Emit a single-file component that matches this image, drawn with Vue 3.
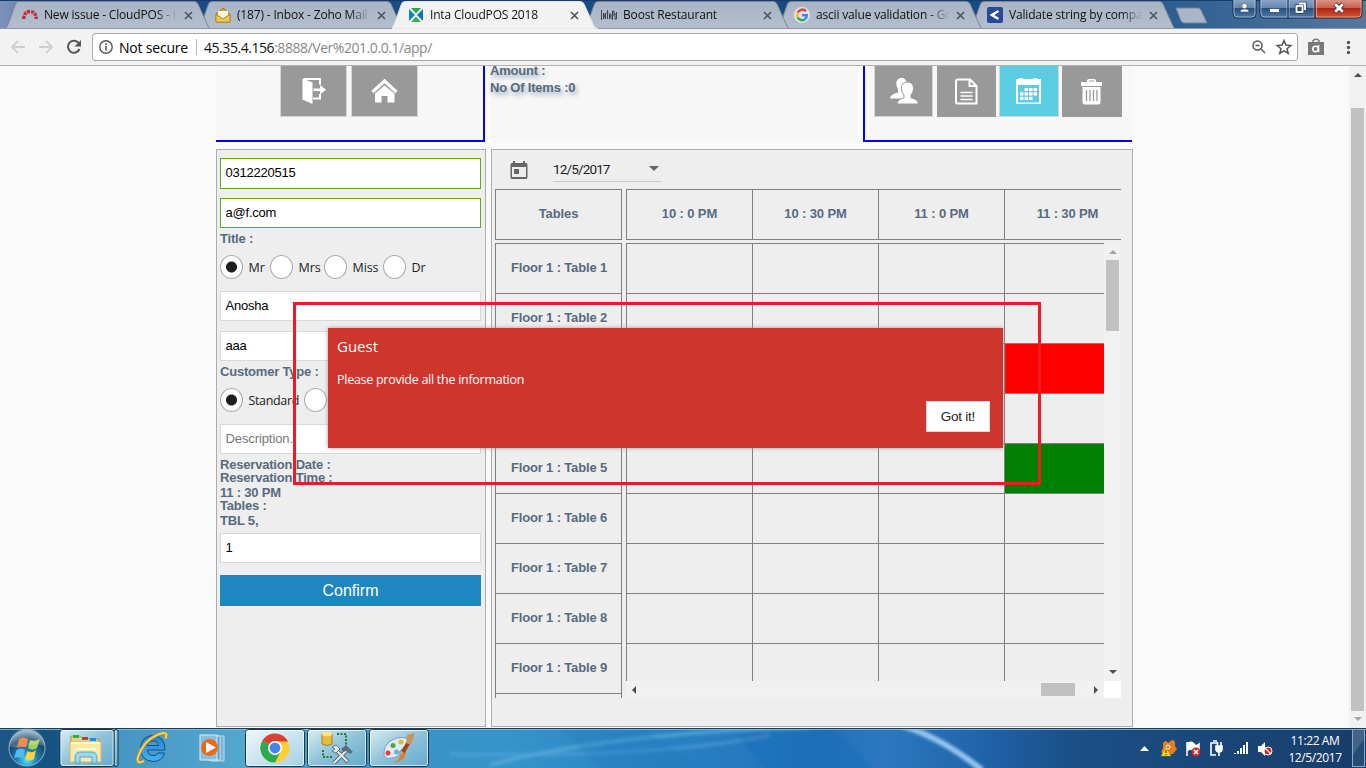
<script setup>
const tabs = [
  { title: 'New issue - CloudPOS - I', icon: 'redmine' },
  { title: '(187) - Inbox - Zoho Mail', icon: 'mail' },
  { title: 'Inta CloudPOS 2018', icon: 'inta', active: true },
  { title: 'Boost Restaurant', icon: 'pos' },
  { title: 'ascii value validation - Go', icon: 'google' },
  { title: 'Validate string by compa', icon: 'code' },
]
const order = [5, 4, 3, 1, 0, 2]
const tabPath = (i) => {
  const x = i * 193
  return `M${x + 5} 29 C${x + 9} 26 ${x + 13} 9 ${x + 16} 3 Q${x + 17} 1.5 ${x + 20} 1.5 H${x + 194} Q${x + 197} 1.5 ${x + 198} 4 L${x + 208} 26 Q${x + 209} 29 ${x + 212} 29 Z`
}
const titles = ['Mr', 'Mrs', 'Miss', 'Dr']
const times = ['10 : 0 PM', '10 : 30 PM', '11 : 0 PM', '11 : 30 PM']
const rows = [1, 2, 3, 4, 5, 6, 7, 8, 9, 10]
const cellClass = (r, c) => (c === 4 && r === 3 ? 'busy' : c === 4 && r === 5 ? 'free' : '')
</script>

<template>
  <div class="screen">
    <header class="tabstrip">
      <svg class="tabshapes" width="1366" height="29" viewBox="0 0 1366 29">
        <defs>
          <linearGradient id="frame" x1="0" x2="1" y1="0" y2="0">
            <stop offset="0" stop-color="#7b93b9" /><stop offset=".02" stop-color="#6482ae" />
            <stop offset=".1" stop-color="#1c4a85" /><stop offset=".3" stop-color="#1a4c86" />
            <stop offset=".7" stop-color="#174a80" /><stop offset=".86" stop-color="#2d5f92" />
            <stop offset="1" stop-color="#55779f" />
          </linearGradient>
          <linearGradient id="tabfill" x1="0" x2="0" y1="0" y2="1">
            <stop offset="0" stop-color="#a9b4c5" /><stop offset="1" stop-color="#b3bfcd" />
          </linearGradient>
        </defs>
        <rect width="1366" height="29" fill="url(#frame)" />
        <rect width="1366" height="1" fill="#163c6c" />
        <path v-for="i in order" :key="i" :d="tabPath(i)" :fill="i === 2 ? '#f2f2f2' : 'url(#tabfill)'" :stroke="i === 2 ? '#dfe3e9' : '#7c8795'" />
        <path d="M1176 8 H1198 Q1200 8 1201 10 L1207 23 H1185 Q1182 23 1181 21 Z" fill="#aab6c8" stroke="#73849d" />
        <rect y="28" width="392" height="1" fill="#8e98a5" /><rect x="598" y="28" width="768" height="1" fill="#8e98a5" />
      </svg>
      <div class="tabrow">
        <div v-for="t in tabs" :key="t.title" class="tab">
          <svg class="fav" width="16" height="16" viewBox="0 0 16 16">
            <path v-if="t.icon === 'redmine'" d="M1.800 12 Q2 4.500 8 4.500 T14.200 12" fill="none" stroke="#c62b35" stroke-width="3.400" stroke-dasharray="3 .900" />
            <g v-else-if="t.icon === 'mail'">
              <path d="M1 7 L8 1 15 7 V15 H1Z" fill="#d1a52f" stroke="#a77d20" /><path d="M3 4 H13 V8 L8 11.500 3 8Z" fill="#fff8e0" />
              <path d="M1 7.500 L8 12 15 7.500 V15 H1Z" fill="#e9c85a" stroke="#ad8322" stroke-width=".8" />
            </g>
            <g v-else-if="t.icon === 'inta'">
              <path d="M3 1 H13 L8 6.500Z" fill="#2ba84a" /><path d="M3 15 H13 L8 9.500Z" fill="#35b34a" />
              <path d="M1 2 L7 8 1 14Z" fill="#0b83c6" /><path d="M15 2 L9 8 15 14Z" fill="#0b75b7" />
            </g>
            <g v-else-if="t.icon === 'pos'" fill="none" stroke="#3d444f">
              <path d="M.5 3V13M2.500 12V6L4.500 12V6M6.500 3V12M5.500 6H7.500M8.500 12V7H10V12M8.500 9H10M11.500 13V4H13V8H11.500M14 6V12H15.500V5" />
            </g>
            <g v-else-if="t.icon === 'google'" fill="none" stroke-width="2.500">
              <circle cx="8" cy="8" r="8" fill="#dfe5ef" />
              <path d="M12 4.300 A5 5 0 0 0 3.700 5.500" stroke="#ea4335" /><path d="M3.700 5.500 A5 5 0 0 0 3.700 10.500" stroke="#fbbc05" />
              <path d="M3.700 10.500 A5 5 0 0 0 11 12.200" stroke="#34a853" /><path d="M11 12.200 A5 5 0 0 0 12.800 8.300 H8" stroke="#4285f4" />
            </g>
            <g v-else><rect width="16" height="16" rx="2" fill="#27489c" /><path d="M11.500 4 L5 8 11.500 12" fill="none" stroke="#fff" stroke-width="2.600" /></g>
          </svg>
          <span :class="['tabtitle', { front: t.active }]">{{ t.title }}</span>
          <svg class="tabclose" width="9" height="9" viewBox="0 0 9 9"><path d="M1 1L8 8M8 1L1 8" stroke="#4e545c" stroke-width="1.600" /></svg>
        </div>
      </div>
      <svg class="winbtns" width="134" height="20" viewBox="0 0 134 20">
        <defs>
          <linearGradient id="wb" x1="0" x2="0" y1="0" y2="1"><stop offset="0" stop-color="#8da7c8" /><stop offset=".48" stop-color="#6384ad" /><stop offset=".5" stop-color="#26507f" /><stop offset="1" stop-color="#517ca8" /></linearGradient>
          <linearGradient id="wc" x1="0" x2="0" y1="0" y2="1"><stop offset="0" stop-color="#dc9a8d" /><stop offset=".46" stop-color="#c9614e" /><stop offset=".5" stop-color="#ad2511" /><stop offset="1" stop-color="#d25a38" /></linearGradient>
        </defs>
        <path d="M1 -1 V14 Q1 18 5 18 H20 Q24 18 24 14 V-1Z" fill="url(#wb)" stroke="#10294b" /><path d="M2 0V14Q2 17 5 17H20Q23 17 23 14V0" fill="none" stroke="#b5c8dd" stroke-opacity=".75" />
        <path d="M28 -1 V14 Q28 18 32 18 H83 V-1Z" fill="url(#wb)" stroke="#10294b" /><path d="M29 0V14Q29 17 32 17H55V0M57 0V17H82V0" fill="none" stroke="#b5c8dd" stroke-opacity=".75" /><path d="M56 0V18" stroke="#10294b" />
        <path d="M83 -1 V18 H126 Q130 18 130 14 V-1Z" fill="url(#wc)" stroke="#4d1415" /><path d="M84.500 0V17H126Q129 17 129 14V0" fill="none" stroke="#efb9aa" stroke-opacity=".7" />
        <circle cx="12.500" cy="6" r="2.700" fill="#fff" stroke="#34465f" stroke-width=".6" /><path d="M8 12 Q8 9 12.500 9 T17 12Z" fill="#fff" stroke="#34465f" stroke-width=".6" />
        <rect x="37.500" y="8.500" width="10" height="4" fill="#fff" stroke="#455a75" />
        <g fill="none" stroke="#34465f" stroke-width="3.500"><path d="M67 3.500H73V10" /><rect x="64.500" y="6" width="6" height="6" /></g>
        <g fill="none" stroke="#fff" stroke-width="1.800"><path d="M67 3.500H73V10" /><rect x="64.500" y="6" width="6" height="6" /></g>
        <path d="M94 4L102 12M102 4L94 12" transform="translate(9 0)" stroke="#573541" stroke-width="4.600" /><path d="M103.300 4.300L110.700 11.700M110.700 4.300L103.300 11.700" stroke="#fff" stroke-width="2.700" />
      </svg>
    </header>

    <nav class="toolbar">
      <svg class="navicons" width="92" height="36" viewBox="0 0 92 36" fill="none">
        <path d="M25 18H12M18 12L12 18L18 24M39 18H52M46 12L52 18L46 24" stroke="#cfcfcf" stroke-width="1.800" />
        <path d="M79 14.500A6 6 0 1 0 79.500 20" stroke="#555" stroke-width="2" /><path d="M81 11V17.500H74.500Z" fill="#555" />
      </svg>
      <div class="omnibox">
        <svg width="14" height="14" viewBox="0 0 14 14"><circle cx="7" cy="7" r="6.200" fill="none" stroke="#555" stroke-width="1.400" /><path d="M7 6V10.500M7 3.300V4.900" stroke="#555" stroke-width="1.600" /></svg>
        <span class="secure">Not secure</span><i class="divider"></i>
        <span class="url"><b>45.35.4.156</b>:8888/Ver%201.0.0.1/app/</span>
        <svg class="omniright" width="42" height="18" viewBox="0 0 42 18" fill="none" stroke="#555" stroke-width="1.500">
          <circle cx="6.500" cy="7.500" r="4.500" /><path d="M10 11L14 15M4.500 7.500H8.500" />
          <path d="M33 2.500L34.900 7.100 39.800 7.500 36 10.700 37.200 15.500 33 12.900 28.800 15.500 30 10.700 26.200 7.500 31.100 7.100Z" />
        </svg>
      </div>
      <svg class="ext" width="68" height="36" viewBox="0 0 68 36">
        <path d="M10 13H26V26H10Z" fill="#797979" /><path d="M15 13V11.500Q18 9 21 11.500V13" fill="none" stroke="#797979" stroke-width="1.500" /><circle cx="17.500" cy="20" r="2.700" fill="none" stroke="#fff" stroke-width="1.500" /><path d="M20.500 16V23" stroke="#fff" stroke-width="1.600" />
        <g fill="#555"><circle cx="50.500" cy="13.500" r="1.700" /><circle cx="50.500" cy="18.500" r="1.700" /><circle cx="50.500" cy="23.500" r="1.700" /></g>
      </svg>
    </nav>

    <div class="viewport">
      <main class="page">
        <div class="top">
          <section class="topleft">
            <button class="tile"><svg width="28" height="30" viewBox="0 0 28 30" fill="none" stroke="#fff" stroke-width="1.900"><path d="M3.500 3H20V8.500M20 18V22.500H13" /><path d="M2.500 2.500L12.500 6.500V28L2.500 23.500Z" fill="#fff" stroke="none" /><path d="M13.500 12.500H20V9L26 13.700 20 18.500V15H13.500Z" fill="#fff" stroke="none" /></svg></button>
            <button class="tile"><svg width="28" height="30" viewBox="0 0 28 30"><path d="M1.500 16L13.500 5L25.500 16" fill="none" stroke="#fff" stroke-width="3.200" /><path d="M4 17.500L13.500 9.500 23.500 17.500V26.500H16.500V20H10.500V26.500H4Z" fill="#fff" /></svg></button>
          </section>
          <section class="summary"><div>Amount :</div><div>No Of Items :0</div></section>
          <section class="topright">
            <button class="tile"><svg class="raised" width="32" height="30" viewBox="0 0 32 30" fill="#fff"><ellipse cx="13.500" cy="9" rx="5.200" ry="6.200" /><path d="M2 23.500Q2 19.500 10 17.500V13H17V23.500Z" /><path d="M9 29Q9 24.500 16 22.800V20Q13.300 17.500 13.300 13.500Q13.500 7 19.500 7T25.500 13.500Q25.500 17.500 23 20V22.800Q30.500 24.500 30.500 29Z" stroke="#999" stroke-width="1" /></svg></button>
            <button class="tile plain"><svg class="raised" width="28" height="30" viewBox="0 0 28 30" fill="none" stroke="#fff" stroke-width="2"><path d="M5 3.500H17L23.500 10V27.500H4.500Q3 27.500 3 26V5Q3 3.500 5 3.500ZM16.500 3.500V10H23.500" /><path d="M7.500 16.500H19.500M7.500 20H19.500M7.500 23.500H19.500" stroke-width="1.700" /></svg></button>
            <button class="tile blue"><svg width="28" height="30" viewBox="0 0 28 30"><path d="M1 3H4V2H8V3H18V2H22V3H26V28H1Z" fill="#fff" /><path d="M3 9H24V26.500H3Z" fill="#5bcde2" /><g fill="#fff"><path d="M9.500 12H13v3H9.500zM14 12h3.500v3H14zM18.500 12H22v3h-3.500zM5 16.200h3.500v3.300H5zM9.500 16.200H13v3.300H9.500zM14 16.200h3.500v3.300H14zM18.500 16.200H22v3.300h-3.500zM5 20.700h3.500V24H5zM9.500 20.700H13V24H9.500zM14 20.700h3.500V24H14z" /></g></svg></button>
            <button class="tile plain"><svg class="raised" width="28" height="30" viewBox="0 0 28 30"><path d="M9 6V4.500Q9 3 11 3H16Q18 3 18 4.500V6H24V10H3V6Z" fill="#fff" /><path d="M11 5H16" stroke="#999" /><path d="M4.500 11H22.500V26Q22.500 28.500 20 28.500H7Q4.500 28.500 4.500 26Z" fill="#fff" /><path d="M8.500 14V25M12 14V25M15.500 14V25M19 14V25" stroke="#999" stroke-width="1.300" /></svg></button>
          </section>
        </div>

        <div class="columns">
          <section class="form">
            <div class="field valid tall">0312220515</div>
            <div class="field valid mail">a@f.com</div>
            <div class="label title">Title :</div>
            <div class="radios">
              <span v-for="(t, i) in titles" :key="t" :class="['radio', 'r' + i]"><i :class="{ on: i === 0 }"></i>{{ t }}</span>
            </div>
            <div class="field first">Anosha</div>
            <div class="field last">aaa</div>
            <div class="label type">Customer Type :</div>
            <div class="radios">
              <span class="radio std"><i class="on"></i>Standard</span><span class="radio"><i></i></span>
            </div>
            <div class="field desc">Description.</div>
            <div class="label res">Reservation Date :<br />Reservation Time :</div>
            <div class="label val">11 : 30 PM</div>
            <div class="label tbl">Tables :</div>
            <div class="label val">TBL 5,</div>
            <div class="field count">1</div>
            <button class="confirm">Confirm</button>
          </section>

          <section class="schedule">
            <div class="datebar">
              <svg width="20" height="20" viewBox="0 0 20 20"><path d="M4 1H6V3H14V1H16V3H17Q18.500 3 18.500 5V17Q18.500 19 17 19H3Q1.500 19 1.500 17V5Q1.500 3 3 3H4ZM3 7V17H17V7Z" fill="#666" fill-rule="evenodd" /><rect x="5" y="9" width="5" height="5" fill="#666" /></svg>
              <div class="date">12/5/2017<i></i></div>
            </div>
            <div class="heads">
              <div class="corner">Tables</div>
              <div class="timeheads"><div v-for="t in times" :key="t">{{ t }}</div></div>
            </div>
            <div class="body">
              <div class="names"><div v-for="r in rows" :key="r"><template v-if="r < 10">Floor 1 : Table {{ r }}</template></div></div>
              <div class="scroller">
                <div class="upper">
                  <div class="cells">
                    <template v-for="r in rows" :key="r"><div v-for="c in 4" :key="c" :class="cellClass(r, c)"></div></template>
                  </div>
                  <div class="vbar"><b class="up dim"></b><i></i><b class="down"></b></div>
                </div>
                <div class="hbar"><b class="left"></b><i></i><b class="right"></b><span></span></div>
              </div>
            </div>
          </section>
        </div>
      </main>
      <div class="pagebar"><b class="up"></b><i></i><b class="down dim"></b></div>
    </div>

    <div class="dialog">
      <h2>Guest</h2>
      <p>Please provide all the information</p>
      <button>Got it!</button>
    </div>
    <div class="marker"></div>

    <footer class="taskbar">
      <svg class="wall" width="1366" height="40" viewBox="0 0 1366 40">
        <defs>
          <linearGradient id="tb" x1="0" x2="1" y1="0" y2="0">
            <stop offset="0" stop-color="#1d5685" /><stop offset=".04" stop-color="#155380" /><stop offset=".085" stop-color="#4596c2" /><stop offset=".18" stop-color="#53a8cf" /><stop offset=".28" stop-color="#3d92c4" /><stop offset=".37" stop-color="#3794ca" /><stop offset=".48" stop-color="#2982c3" /><stop offset=".6" stop-color="#2472b8" /><stop offset=".65" stop-color="#2b78bf" /><stop offset=".72" stop-color="#2063a9" /><stop offset=".785" stop-color="#1b4f86" /><stop offset="1" stop-color="#173d68" />
          </linearGradient>
          <linearGradient id="tile" x1="0" x2="1" y1="0" y2="1"><stop offset="0" stop-color="#d9edf4" /><stop offset=".5" stop-color="#8fc2d9" /><stop offset="1" stop-color="#64a9cd" /></linearGradient>
          <linearGradient id="hot" x1="0" x2="1" y1="0" y2="1"><stop offset="0" stop-color="#eff8fc" /><stop offset="1" stop-color="#a5d0e5" /></linearGradient>
          <radialGradient id="orb" cx=".5" cy=".85" r=".8"><stop offset="0" stop-color="#4ce3fa" /><stop offset=".35" stop-color="#1c82b4" /><stop offset=".75" stop-color="#194267" /><stop offset="1" stop-color="#81a4bd" /></radialGradient>
          <linearGradient id="ie" x1="0" x2="0" y1="0" y2="1"><stop offset="0" stop-color="#2a7fc9" /><stop offset="1" stop-color="#42b4ee" /></linearGradient>
          <filter id="soft"><feGaussianBlur stdDeviation="1.500" /></filter>
        </defs>
        <rect width="1366" height="40" fill="url(#tb)" />
        <g filter="url(#soft)" fill="none"><path d="M903 -2Q942 10 982 42" stroke="#94c3ef" stroke-width="6" /><path d="M490 37Q610 5 810 -1" stroke="#62b3df" stroke-opacity=".6" stroke-width="4" /><path d="M450 26Q660 30 770 7" stroke="#54a6df" stroke-opacity=".5" stroke-width="4" /><path d="M640 0Q680 24 700 42H600L560 0Z" fill="#1d75b6" fill-opacity=".25" /><path d="M735 5L765 42H875L835 0Z" fill="#1764b0" fill-opacity=".22" /></g>
        <rect width="1366" height="1" fill="#203b54" /><rect y="1" width="1366" height="1" fill="#8dc1dd" fill-opacity=".8" />
        <circle cx="27" cy="20" r="18" fill="url(#orb)" stroke="#8eb4c8" />
        <path d="M19 11Q23 8 28 11L26 20Q21 17 17 20Z" fill="#f36b25" /><path d="M30 12Q35 14 40 11L37 20Q33 23 28 20Z" fill="#9dd251" /><path d="M16.500 22Q21 19 25 22L23 31Q19 28 14 30Z" fill="#55baf2" /><path d="M27.500 23Q32 26 36 22L34 31Q29 34 25 31Z" fill="#ffd13b" />
        <path d="M9 18A18 18 0 0 1 45 18Q35 15 27 18T9 18" fill="#fff" fill-opacity=".2" />
        <g stroke="#18364d" fill="url(#tile)"><rect x="114" y="1.500" width="4" height="37" rx="2" /><rect x="60" y="1.500" width="54" height="37" rx="3" /><rect x="245.500" y="1.500" width="59" height="37" rx="3" fill="url(#hot)" /><rect x="307.500" y="1.500" width="59" height="37" rx="3" /><rect x="369.500" y="1.500" width="59" height="37" rx="3" /></g>
        <g fill="none" stroke="#fff" stroke-opacity=".65"><rect x="61" y="2.500" width="52" height="35" rx="2" /><rect x="246.500" y="2.500" width="57" height="35" rx="2" /><rect x="308.500" y="2.500" width="57" height="35" rx="2" /><rect x="370.500" y="2.500" width="57" height="35" rx="2" /></g>
        <g><path d="M71 8H80L83 11H99V32H71Z" fill="#e8d47e" stroke="#b79844" /><path d="M73 7H79V10H73Z" fill="#30b046" /><path d="M82 9H88V12H82Z" fill="#cf3c2c" /><path d="M90 10H96V13H90Z" fill="#3188d4" /><path d="M70 14H101V34H70Z" fill="#f8e9a8" stroke="#d2b766" /><path d="M71 15H100M75 21H96" stroke="#fff9d8" stroke-width="2" /><path d="M75 35V30Q75 24 80 24H92Q97 24 97 30V35H92V29H80V35Z" fill="#9cd7ee" stroke="#54a6c8" /></g>
        <g><path d="M165 22H147.500Q148 27.500 153 27.500Q156.500 27.500 158 25H164.500Q162 33.500 153 33.500Q140.500 32.500 140.500 20Q141.500 7.500 153 7.500Q165 8 165 22ZM147.500 17.500H158.500Q158 13 153 13T147.500 17.500Z" fill="url(#ie)" fill-rule="evenodd" stroke="#0f4e96" stroke-width="1" /><path d="M144 33Q136 37 138 29Q143 13 158 6.500Q169 2 165.500 10.500" fill="none" stroke="#d49a20" stroke-width="3" /><path d="M144 33Q136 37 138 29Q143 13 158 6.500Q169 2 165.500 10.500" fill="none" stroke="#fbd34e" stroke-width="1.800" /></g>
        <g><path d="M211 8H224V33H211Z" fill="#81b5d4" stroke="#b8d8e8" /><path d="M207 8H220V32H207Z" fill="#5c9ec7" stroke="#c1dce9" /><rect x="200" y="7" width="17" height="25" fill="#88bddd" stroke="#d8ecf5" /><circle cx="209.500" cy="19.500" r="8.500" fill="#ea6b14" /><path d="M206 14L216 19.500L206 25Z" fill="#fff" /></g>
        <g><circle cx="275" cy="20" r="14.500" fill="#ffcd35" /><path d="M275 20L262.500 12.500A14.500 14.500 0 0 1 288 13.500H275Z" fill="#dc4034" /><path d="M275 20L262.500 12.500A14.500 14.500 0 0 0 275 34.500L281 23Z" fill="#2da94f" /><circle cx="275" cy="20" r="7" fill="#fff" /><circle cx="275" cy="20" r="5.400" fill="#4384ed" /></g>
        <g><path d="M322 6V16Q327 19 332 16V6Z" fill="#e8b93c" stroke="#aa7e1f" /><ellipse cx="327" cy="6" rx="5" ry="2.300" fill="#ffe383" /><path d="M337 6H346V17M323 22V29H333" fill="none" stroke="#267d2b" stroke-width="2" stroke-dasharray="2 1.500" /><path d="M335 21L348 34M348 21L334 35" stroke="#596a77" stroke-width="4" /><path d="M335 21L347.500 33.500M348 21L334 35" stroke="#e7eef3" stroke-width="2" /><path d="M341 21L346 17L353 24L350 26L346 23L343 24Z" fill="#596d7b" /><path d="M332 19L336 17L340 21L336 25L332 23L335 21Z" fill="#dce6ec" stroke="#657684" /></g>
        <g><path d="M384 28Q383 17 392 12Q402 7 411 12L400 23Q400 29 392 30Q387 32 384 28Z" fill="#dcecf6" stroke="#839fb2" /><circle cx="388" cy="25" r="2.500" fill="#e34132" /><circle cx="393" cy="17.500" r="2.500" fill="#54a63c" /><circle cx="401" cy="14" r="2.500" fill="#e3b72f" /><circle cx="396.500" cy="24" r="2.500" fill="#6eb0d4" /><path d="M394 35Q400 31 400 27L405 22Q409 31 394 35Z" fill="#dd7f2d" /><path d="M403 24L410 12" stroke="#a3431a" stroke-width="4" /><path d="M406 15L407 7L415 5L411 17Z" fill="#c9945a" /></g>
        <path d="M1140 23L1144.500 18L1149 23Z" fill="#fff" />
        <g><path d="M1163 15Q1166 11 1168 15L1172 12Q1176 12 1175 18L1177 21 1173 26 1163 26Q1160 24 1163 20Z" fill="#ef7d17" /><circle cx="1168" cy="19" r="2" fill="none" stroke="#fff" /><path d="M1166 19L1161 28H1171Z" fill="#f6d629" stroke="#b09413" stroke-width=".5" /><path d="M1166 22V25M1166 26V27" stroke="#222" /></g>
        <g><path d="M1187 14V28M1188 15Q1192 13 1194 16T1199 16V23Q1196 24 1193 22T1188 22Z" fill="#fff" stroke="#fff" stroke-width="1.500" /><circle cx="1196" cy="24" r="4.500" fill="#cf2930" /><path d="M1194 22L1198 26M1198 22L1194 26" stroke="#fff" stroke-width="1.500" /></g>
        <g fill="none" stroke="#fff" stroke-width="1.600"><path d="M1217 15H1211V27H1216M1213 13H1217" /><path d="M1216 18H1222V21Q1222 24 1219 24T1216 21ZM1217.500 14V18M1221 14V18M1219 24V28" fill="#fff" /></g>
        <path d="M1235 25V26M1238 23V26M1241 20V26M1244 17V26M1247 14V26" stroke="#fff" stroke-width="2" />
        <g><path d="M1258 18H1261L1265 14V28L1261 24H1258Z" fill="#fff" /><circle cx="1268" cy="23" r="4" fill="#d71920" stroke="#fff" /><path d="M1265 20L1271 26" stroke="#fff" stroke-width="1.400" /></g>
        <rect x="1352.500" y="1.500" width="12" height="37" fill="#254c76" stroke="#8ba7c1" /><path d="M1353 2H1364V11L1353 27Z" fill="#fff" fill-opacity=".13" />
      </svg>
      <div class="clock">11:22 AM<br />12/5/2017</div>
    </footer>
  </div>
</template>

<style>
html, body { margin: 0; overflow: hidden; }
</style>

<style scoped>
* { box-sizing: border-box; }
button { padding: 0; border: 0; font: inherit; }
.screen { position: relative; width: 1366px; height: 768px; display: flex; flex-direction: column; overflow: hidden; background: #fafafa; font-family: "Open Sans", "Noto Sans", sans-serif; }
svg { display: block; flex: none; }
.tabstrip { position: relative; height: 29px; flex: none; }
.tabshapes, .wall { position: absolute; inset: 0; }
.tabrow { position: relative; display: flex; padding-left: 22px; }
.tab { width: 193px; height: 29px; display: flex; align-items: center; flex: none; padding-top: 1px; }
.tabtitle { width: 136px; margin-left: 6px; font-size: 12px; letter-spacing: -.17px; line-height: 20px; color: #111; white-space: nowrap; -webkit-mask-image: linear-gradient(90deg, #000 112px, transparent 134px); mask-image: linear-gradient(90deg, #000 112px, transparent 134px); }
.tabclose { margin-left: 4px; }
.winbtns { position: absolute; top: 0; left: 1232px; }
.toolbar { height: 37px; flex: none; display: flex; background: #f2f2f2; border-bottom: 1px solid #b2b0b2; }
.omnibox { width: 1206px; height: 28px; margin-top: 4px; padding-left: 6px; display: flex; align-items: center; border: 1px solid #a9a9a9; border-radius: 3px; background: #fff; font-size: 14px; }
.secure { margin-left: 6px; width: 68px; white-space: nowrap; letter-spacing: -.42px; }
.secure { letter-spacing: -.2px; }
.divider { width: 1px; height: 16px; margin: 0 7px 0 9px; background: #bbb; }
.url { color: #888; flex: 1; letter-spacing: -.45px; }
.url b { font-weight: 400; color: #111; }
.omniright { margin-right: 4px; }
.viewport { height: 662px; flex: none; display: flex; justify-content: space-between; overflow: hidden; }
.page { width: 917px; margin-left: 216px; }
.top { height: 76px; display: flex; }
.topleft { width: 269px; display: flex; gap: 4px; padding-left: 64px; border-right: 2px solid #00f; border-bottom: 2px solid #00f; background: #f7f7f7; }
.tile { width: 67px; height: 51px; display: flex; align-items: center; justify-content: center; background: #999; border: 1px solid #d6d6d6; border-top: 0; }
.raised { margin-bottom: 2px; }
.summary { width: 367px; margin-left: 5px; background: #f7f7f7; font: bold 13px/17px "Liberation Sans", sans-serif; color: #566b80; letter-spacing: -.2px; text-shadow: 2px 3px 5px #91a5b8; }
.summary div:first-child { margin-top: -4px; }
.topright { width: 269px; margin-left: 6px; padding-left: 9px; display: flex; gap: 3px; border-left: 2px solid #00f; border-bottom: 2px solid #00f; background: #f7f7f7; }
.topright .tile { width: 59px; }
.topright .tile:nth-child(2) { margin-left: 1px; }
.topright .blue { width: 60px; background: #5bcde2; }
.topright .tile:last-child { width: 60px; }
.topright .plain { border: 0; }
.columns { display: flex; gap: 5px; margin-top: 7px; height: 578px; }
.form { width: 270px; border: 1px solid #acacac; background: #eee; padding: 8px 4px 0 3px; display: flex; flex-direction: column; color: #222; }
.field { height: 30px; flex: none; background: #fff; border: 1px solid #d9d9d9; padding-left: 4.5px; font: 13px/28px "Liberation Sans", sans-serif; letter-spacing: -.22px; color: #000; }
.valid { border-color: #60a917; }
.tall { height: 31px; }
.mail { margin-top: 9px; }
.label { font: bold 13px/14px "Liberation Sans", sans-serif; letter-spacing: -.2px; color: #566b80; }
.title { height: 26px; padding-top: 4px; }
.radios { height: 25px; display: flex; margin-top: 1px; }
.radio { display: flex; align-items: center; font-size: 12.5px; letter-spacing: -.1px; height: 24px; flex: none; }
.radio i { width: 23px; height: 24px; flex: none; margin-right: 5.500px; border-radius: 50%; border: 1px solid #aaa; background: #fff; }
.radio i.on { background: radial-gradient(circle, #1d1d1d 0 5px, #fff 6px); }
.r0 { width: 50px; }
.r1 { width: 54px; }
.r2 { width: 59px; }
.std { width: 84px; letter-spacing: -.35px; }
.first { margin-top: 11px; }
.last { margin-top: 10px; }
.type { height: 26px; padding-top: 4px; }
.desc { margin-top: 11px; color: #777; letter-spacing: -.1px; }
.res { padding-top: 4px; line-height: 13px; }
.val { line-height: 15px; height: 15px; margin-top: 1px; }
.tbl { line-height: 12px; height: 12px; }
.count { margin-top: 5px; }
.confirm { height: 31px; margin-top: 12px; flex: none; background: #1e87c0; color: #fff; font: 16px/31px "Liberation Sans", sans-serif; }
.schedule { width: 642px; border: 1px solid #acacac; background: #eee; padding-left: 3px; }
.datebar { height: 39px; display: flex; padding: 10px 0 0 14px; }
.date { position: relative; width: 108px; height: 22px; margin-left: 24px; border-bottom: 1px solid #c9c9c9; font: 13.5px/19px Roboto, sans-serif; letter-spacing: -.9px; letter-spacing: -.85px; color: #222; }
.date i { position: absolute; right: 2px; top: 6px; border: 5px solid transparent; border-top-color: #666; border-bottom: 0; }
.heads { display: flex; gap: 4px; height: 51px; font: bold 13px/48px "Liberation Sans", sans-serif; letter-spacing: -.12px; color: #566b80; text-align: center; }
.corner { width: 127px; border: 1px solid #808080; }
.timeheads { width: 495px; display: flex; overflow: hidden; border-top: 1px solid #808080; border-bottom: 1px solid #808080; }
.timeheads div { width: 126px; flex: none; border-left: 1px solid #808080; }
.body { display: flex; gap: 4px; height: 455px; margin-top: 3px; }
.names { width: 127px; overflow: hidden; border: solid #808080; border-width: 0 1px; color: #566b80; font: bold 13px/48px "Liberation Sans", sans-serif; letter-spacing: -.15px; text-align: center; }
.names div { height: 50px; padding-left: 1px; border-top: 1px solid #808080; }
.scroller { width: 495px; }
.upper { display: flex; height: 438px; }
.cells { width: 478px; display: grid; grid-template-columns: repeat(4, 126px); grid-auto-rows: 50px; overflow: hidden; }
.cells div { border: solid #808080; border-width: 1px 0 0 1px; }
.cells .busy { background: #f00; }
.cells .free { background: #008000; }
.vbar, .pagebar { width: 17px; background: #f1f1f1; display: flex; flex-direction: column; align-items: center; }
.vbar i { height: 71px; width: 13px; background: #c1c1c1; margin-top: 8px; }
.vbar .down { margin-top: auto; margin-bottom: 7px; }
.hbar { display: flex; align-items: center; height: 17px; background: #f1f1f1; }
.hbar i { width: 34px; height: 13px; background: #c1c1c1; margin-left: 405px; }
.hbar span { width: 17px; height: 17px; margin-left: auto; background: #fff; }
.up, .down { width: 0; height: 0; border: 4px solid transparent; }
.up { border-top: 0; border-bottom-color: #505050; margin-top: 7px; }
.vbar .up { margin-top: 7px; }
.vbar .up + i { margin-top: 6px; }
.down { border-bottom: 0; border-top-color: #505050; }
.up.dim { border-bottom-color: #a3a3a3; }
.down.dim { border-top-color: #a3a3a3; }
.left, .right { border: 4px solid transparent; }
.left { border-left: 0; border-right-color: #505050; margin-left: 6px; }
.right { border-right: 0; border-left-color: #505050; margin-left: 19px; }
.pagebar i { width: 13px; height: 603px; background: #c1c1c1; margin-top: 31px; }
.pagebar .down { margin-top: 6px; }
.dialog { position: absolute; left: 328px; top: 328px; width: 675px; height: 120px; padding: 8px 9px; background: #ce352c; color: #fff; box-shadow: 0 0 4px #999; }
.dialog h2 { margin: 0; font-weight: 400; font-size: 15px; line-height: 20px; }
.dialog p { margin: 15px 0 0; font-size: 12.5px; line-height: 18px; letter-spacing: -.27px; }
.dialog button { display: block; width: 64px; height: 31px; margin: 12px 4px 0 auto; background: #fff; border: 1px solid #d9d9d9; color: #222; font: 13.5px/29px "Liberation Sans", sans-serif; letter-spacing: -.25px; }
.marker { position: absolute; left: 293px; top: 302px; width: 748px; height: 183px; border: 3px solid #ed1c24; }
.taskbar { position: relative; height: 40px; flex: none; display: flex; justify-content: flex-end; }
.clock { position: relative; width: 80px; margin: 4px 11px 0 0; color: #fff; text-align: center; font-size: 12px; line-height: 17px; letter-spacing: -.4px; white-space: nowrap; }
</style>
